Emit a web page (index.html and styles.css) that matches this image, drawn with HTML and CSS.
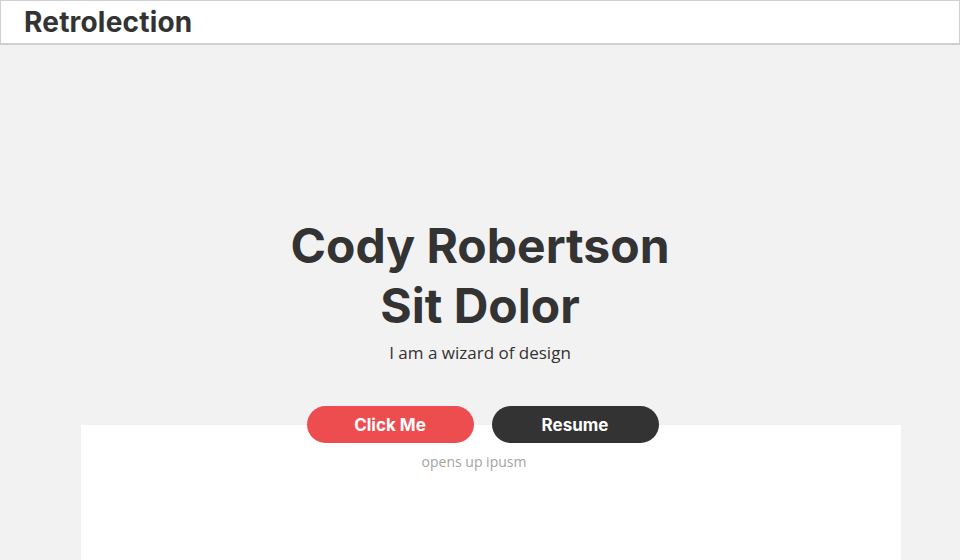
FILE: index.html
```html
<!doctype html>
<html lang="en">
    <head>
        <meta charset="UTF-8" />
        <meta name="viewport" content="width=device-width, initial-scale=1.0" />
        <title>Retrolection</title>
        <link rel="stylesheet" href="styles.css">
    </head>
    <body>
        <header class="topbar">
            <a class="brand" href="#">Retrolection</a>
        </header>

        <section class="hero">
            <h1>Cody Robertson<br />Sit Dolor</h1>
            <p class="tagline">I am a wizard of design</p>
            <div class="actions">
                <a class="btn btn-red" href="#">Click Me</a>
                <a class="btn btn-dark" href="#">Resume</a>
            </div>
        </section>

        <section class="panel">
            <p class="hint">opens up ipusm</p>
        </section>
    </body>
</html>
```

FILE: styles.css
```css
* {
    margin: 0;
    padding: 0;
    box-sizing: border-box;
}

body {
    font-family: Inter, "Liberation Sans", sans-serif;
    background: #f2f2f2;
    color: #333;
    height: 100vh;
    overflow: hidden;
    display: flex;
    flex-direction: column;
}

.topbar {
    height: 45px;
    flex-shrink: 0;
    background: #fff;
    border: 1px solid #cfcfcf;
    border-bottom-width: 2px;
    padding-left: 23px;
    display: flex;
    align-items: center;
}

.brand {
    font-size: 28px;
    font-weight: 700;
    color: #333;
    text-decoration: none;
    letter-spacing: 0.2px;
}

.hero {
    padding-top: 171px;
    text-align: center;
    position: relative;
    z-index: 1;
}

h1 {
    font-size: 48px;
    line-height: 60px;
    font-weight: 700;
    letter-spacing: 0;
}

.tagline {
    font-family: "Open Sans", sans-serif;
    font-size: 17px;
    margin-top: 5px;
}

.actions {
    display: flex;
    justify-content: center;
    gap: 18px;
    margin-top: 42px;
    padding-left: 5px;
    margin-bottom: -18px;
}

.btn {
    width: 167px;
    height: 37px;
    border-radius: 19px;
    display: flex;
    align-items: center;
    justify-content: center;
    color: #fff;
    font-size: 17px;
    font-weight: 700;
    text-decoration: none;
}

.btn-red {
    background: #ee4d4f;
}

.btn-dark {
    background: #333;
}

.panel {
    flex: 1;
    width: 820px;
    margin-left: 81px;
    background: #fff;
    padding-top: 27px;
    padding-right: 34px;
    text-align: center;
}

.hint {
    font-family: "Open Sans", sans-serif;
    font-size: 14px;
    color: #a3a3a3;
}
```
